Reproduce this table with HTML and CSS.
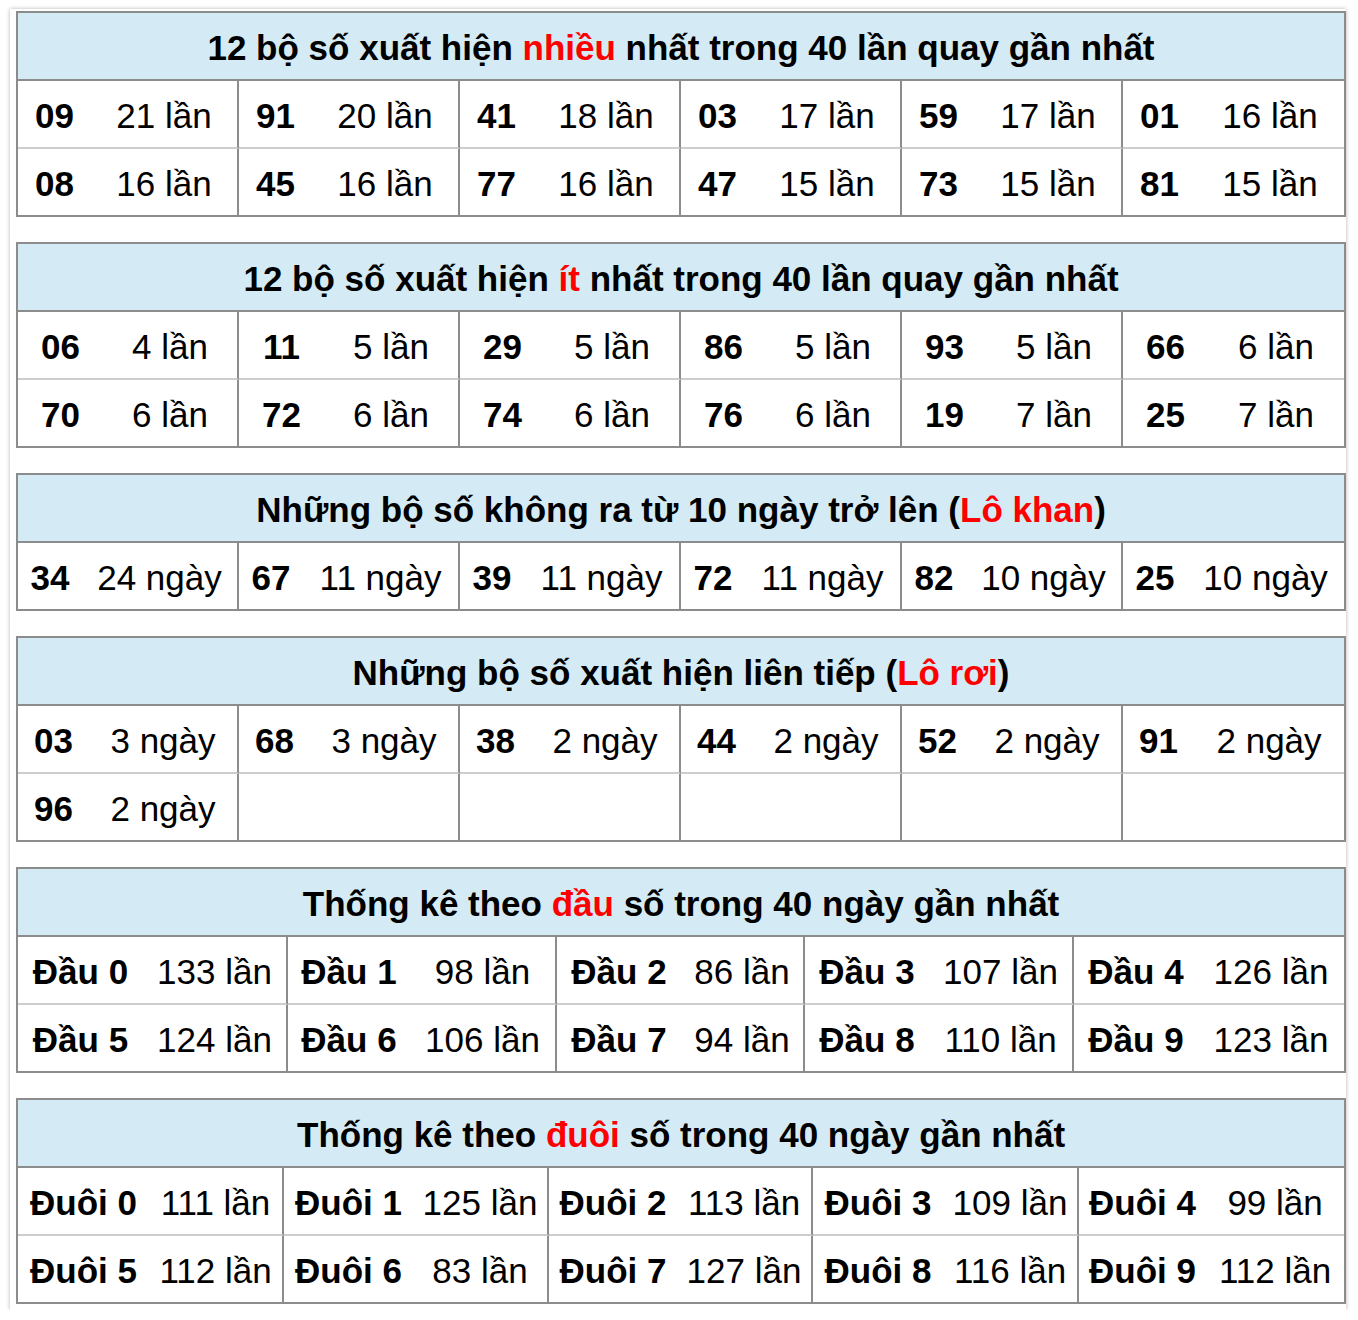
FILE: index.html
```html
<!DOCTYPE html>
<html lang="vi">
<head>
<meta charset="utf-8">
<title>Thống kê lô tô</title>
<link rel="stylesheet" href="styles.css">
</head>
<body>
<div class="box">

<table class="stat t1">
<colgroup><col class="n"><col class="c"><col class="n"><col class="c"><col class="n"><col class="c"><col class="n"><col class="c"><col class="n"><col class="c"><col class="n"><col class="c"></colgroup>
<tr><th colspan="12">12 bộ số xuất hiện <span class="hl">nhiều</span> nhất trong 40 lần quay gần nhất</th></tr>
<tr><td class="n">09</td><td class="c">21 lần</td><td class="n">91</td><td class="c">20 lần</td><td class="n">41</td><td class="c">18 lần</td><td class="n">03</td><td class="c">17 lần</td><td class="n">59</td><td class="c">17 lần</td><td class="n">01</td><td class="c">16 lần</td></tr>
<tr><td class="n">08</td><td class="c">16 lần</td><td class="n">45</td><td class="c">16 lần</td><td class="n">77</td><td class="c">16 lần</td><td class="n">47</td><td class="c">15 lần</td><td class="n">73</td><td class="c">15 lần</td><td class="n">81</td><td class="c">15 lần</td></tr>
</table>

<table class="stat t2">
<colgroup><col class="n"><col class="c"><col class="n"><col class="c"><col class="n"><col class="c"><col class="n"><col class="c"><col class="n"><col class="c"><col class="n"><col class="c"></colgroup>
<tr><th colspan="12">12 bộ số xuất hiện <span class="hl">ít</span> nhất trong 40 lần quay gần nhất</th></tr>
<tr><td class="n">06</td><td class="c">4 lần</td><td class="n">11</td><td class="c">5 lần</td><td class="n">29</td><td class="c">5 lần</td><td class="n">86</td><td class="c">5 lần</td><td class="n">93</td><td class="c">5 lần</td><td class="n">66</td><td class="c">6 lần</td></tr>
<tr><td class="n">70</td><td class="c">6 lần</td><td class="n">72</td><td class="c">6 lần</td><td class="n">74</td><td class="c">6 lần</td><td class="n">76</td><td class="c">6 lần</td><td class="n">19</td><td class="c">7 lần</td><td class="n">25</td><td class="c">7 lần</td></tr>
</table>

<table class="stat t3">
<colgroup><col class="n"><col class="c"><col class="n"><col class="c"><col class="n"><col class="c"><col class="n"><col class="c"><col class="n"><col class="c"><col class="n"><col class="c"></colgroup>
<tr><th colspan="12">Những bộ số không ra từ 10 ngày trở lên (<span class="hl">Lô khan</span>)</th></tr>
<tr><td class="n">34</td><td class="c">24 ngày</td><td class="n">67</td><td class="c">11 ngày</td><td class="n">39</td><td class="c">11 ngày</td><td class="n">72</td><td class="c">11 ngày</td><td class="n">82</td><td class="c">10 ngày</td><td class="n">25</td><td class="c">10 ngày</td></tr>
</table>

<table class="stat t4">
<colgroup><col class="n"><col class="c"><col class="n"><col class="c"><col class="n"><col class="c"><col class="n"><col class="c"><col class="n"><col class="c"><col class="n"><col class="c"></colgroup>
<tr><th colspan="12">Những bộ số xuất hiện liên tiếp (<span class="hl">Lô rơi</span>)</th></tr>
<tr><td class="n">03</td><td class="c">3 ngày</td><td class="n">68</td><td class="c">3 ngày</td><td class="n">38</td><td class="c">2 ngày</td><td class="n">44</td><td class="c">2 ngày</td><td class="n">52</td><td class="c">2 ngày</td><td class="n">91</td><td class="c">2 ngày</td></tr>
<tr><td class="n">96</td><td class="c">2 ngày</td><td class="n"></td><td class="c"></td><td class="n"></td><td class="c"></td><td class="n"></td><td class="c"></td><td class="n"></td><td class="c"></td><td class="n"></td><td class="c"></td></tr>
</table>

<table class="stat t5">
<colgroup><col class="n1"><col class="c1"><col class="n2"><col class="c2"><col class="n3"><col class="c3"><col class="n4"><col class="c4"><col class="n5"><col class="c5"></colgroup>
<tr><th colspan="10">Thống kê theo <span class="hl">đầu</span> số trong 40 ngày gần nhất</th></tr>
<tr><td class="n">Đầu 0</td><td class="c">133 lần</td><td class="n">Đầu 1</td><td class="c">98 lần</td><td class="n">Đầu 2</td><td class="c">86 lần</td><td class="n">Đầu 3</td><td class="c">107 lần</td><td class="n">Đầu 4</td><td class="c">126 lần</td></tr>
<tr><td class="n">Đầu 5</td><td class="c">124 lần</td><td class="n">Đầu 6</td><td class="c">106 lần</td><td class="n">Đầu 7</td><td class="c">94 lần</td><td class="n">Đầu 8</td><td class="c">110 lần</td><td class="n">Đầu 9</td><td class="c">123 lần</td></tr>
</table>

<table class="stat t6">
<colgroup><col class="n1"><col class="c1"><col class="n2"><col class="c2"><col class="n3"><col class="c3"><col class="n4"><col class="c4"><col class="n5"><col class="c5"></colgroup>
<tr><th colspan="10">Thống kê theo <span class="hl">đuôi</span> số trong 40 ngày gần nhất</th></tr>
<tr><td class="n">Đuôi 0</td><td class="c">111 lần</td><td class="n">Đuôi 1</td><td class="c">125 lần</td><td class="n">Đuôi 2</td><td class="c">113 lần</td><td class="n">Đuôi 3</td><td class="c">109 lần</td><td class="n">Đuôi 4</td><td class="c">99 lần</td></tr>
<tr><td class="n">Đuôi 5</td><td class="c">112 lần</td><td class="n">Đuôi 6</td><td class="c">83 lần</td><td class="n">Đuôi 7</td><td class="c">127 lần</td><td class="n">Đuôi 8</td><td class="c">116 lần</td><td class="n">Đuôi 9</td><td class="c">112 lần</td></tr>
</table>

</div>
</body>
</html>
```

FILE: styles.css
```css
html, body {
  margin: 0;
  padding: 0;
  background: #ffffff;
}

body {
  font-family: "Liberation Sans", Arial, Helvetica, sans-serif;
  color: #000000;
}

.box {
  margin: 9px 0 0 10px;
  width: 1336px;
  box-sizing: border-box;
  padding: 2px 3px 6px 6px;
  background: #ffffff;
  box-shadow: 0 0 4px rgba(0, 0, 0, 0.3);
}

.stat {
  width: 1327px;
  table-layout: fixed;
  border-collapse: separate;
  border-spacing: 0;
  border: 2px solid #8c8c8c;
  margin: 0 0 25px 0;
  font-size: 35px;
}

.stat:last-child {
  margin-bottom: 0;
}

.stat th {
  background: #d4ebf5;
  font-weight: bold;
  height: 62px;
  line-height: 62px;
  padding: 4px 0 0 0;
  text-align: center;
  white-space: nowrap;
  border-bottom: 2px solid #8c8c8c;
}

.stat td {
  height: 62px;
  line-height: 62px;
  padding: 4px 0 0 0;
  text-align: center;
  white-space: nowrap;
  border-bottom: 2px solid #cdcdcd;
}

.stat tr:last-child td {
  border-bottom: none;
}

.stat td.n {
  font-weight: bold;
}

.stat td.c {
  border-right: 2px solid #8c8c8c;
}

.stat td.c:last-child {
  border-right: none;
}

.hl {
  color: #ff0000;
}

/* column widths */
.t1 col.n { width: 73px; }
.t1 col.c { width: 148px; }

.t2 col.n { width: 85px; }
.t2 col.c { width: 136px; }

.t3 col.n { width: 64px; }
.t3 col.c { width: 157px; }

.t4 col.n { width: 71px; }
.t4 col.c { width: 150px; }

.t5 col.n1 { width: 125px; }
.t5 col.c1 { width: 145px; }
.t5 col.n2 { width: 122px; }
.t5 col.c2 { width: 147px; }
.t5 col.n3 { width: 124px; }
.t5 col.c3 { width: 124px; }
.t5 col.n4 { width: 124px; }
.t5 col.c4 { width: 145px; }
.t5 col.n5 { width: 124px; }
.t5 col.c5 { width: 146px; }

.t6 col.n1 { width: 131px; }
.t6 col.c1 { width: 135px; }
.t6 col.n2 { width: 129px; }
.t6 col.c2 { width: 136px; }
.t6 col.n3 { width: 128px; }
.t6 col.c3 { width: 136px; }
.t6 col.n4 { width: 130px; }
.t6 col.c4 { width: 136px; }
.t6 col.n5 { width: 127px; }
.t6 col.c5 { width: 138px; }
```
